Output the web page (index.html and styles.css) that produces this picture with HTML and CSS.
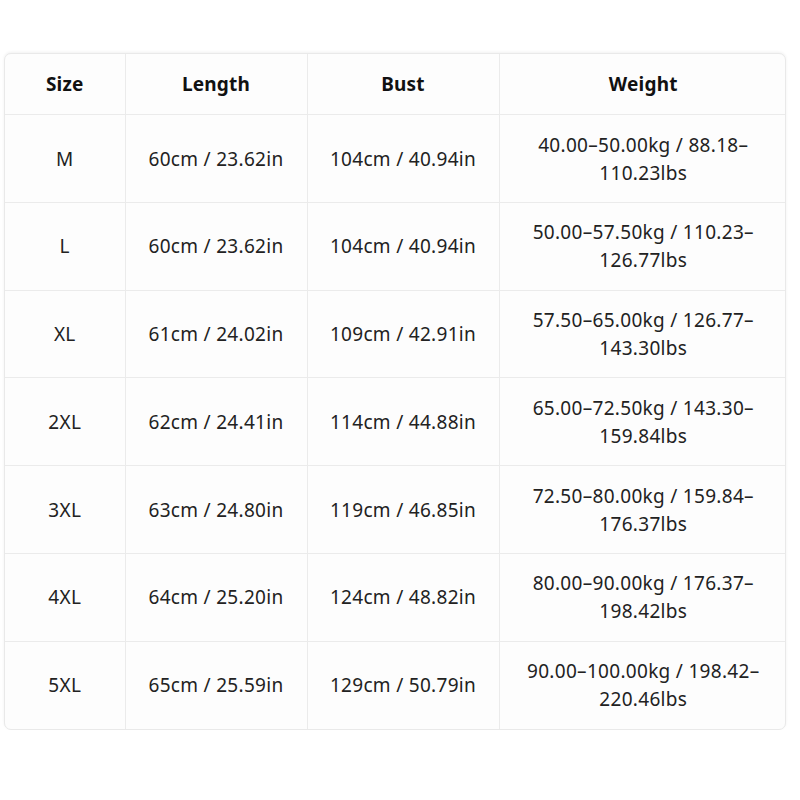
FILE: index.html
```html
<!DOCTYPE html>
<html>
<head>
<meta charset="utf-8">
<link rel="stylesheet" href="styles.css">
</head>
<body>
<div class="page">
  <div class="card">
    <table class="sizes">
      <colgroup>
        <col class="c1"><col class="c2"><col class="c3"><col class="c4">
      </colgroup>
      <thead>
        <tr><th>Size</th><th>Length</th><th>Bust</th><th>Weight</th></tr>
      </thead>
      <tbody>
        <tr><td>M</td><td>60cm / 23.62in</td><td>104cm / 40.94in</td><td>40.00–50.00kg / 88.18–110.23lbs</td></tr>
        <tr><td>L</td><td>60cm / 23.62in</td><td>104cm / 40.94in</td><td>50.00–57.50kg / 110.23–126.77lbs</td></tr>
        <tr><td>XL</td><td>61cm / 24.02in</td><td>109cm / 42.91in</td><td>57.50–65.00kg / 126.77–143.30lbs</td></tr>
        <tr><td>2XL</td><td>62cm / 24.41in</td><td>114cm / 44.88in</td><td>65.00–72.50kg / 143.30–159.84lbs</td></tr>
        <tr><td>3XL</td><td>63cm / 24.80in</td><td>119cm / 46.85in</td><td>72.50–80.00kg / 159.84–176.37lbs</td></tr>
        <tr><td>4XL</td><td>64cm / 25.20in</td><td>124cm / 48.82in</td><td>80.00–90.00kg / 176.37–198.42lbs</td></tr>
        <tr><td>5XL</td><td>65cm / 25.59in</td><td>129cm / 50.79in</td><td>90.00–100.00kg / 198.42–220.46lbs</td></tr>
      </tbody>
    </table>
  </div>
</div>
</body>
</html>
```

FILE: styles.css
```css
html, body {
  margin: 0;
  padding: 0;
  background: #ffffff;
}
.page {
  padding: 53px 14px 0 4px;
  font-family: "Noto Sans", "Open Sans", "Liberation Sans", sans-serif;
  color: #222222;
}
.card {
  width: 782px;
  border: 1px solid #e9e9e9;
  border-radius: 7px;
  overflow: hidden;
  box-shadow: 0 -1px 3px rgba(0,0,0,0.06);
  background: #fdfdfd;
  box-sizing: border-box;
}
.sizes {
  width: 100%;
  border-collapse: collapse;
  table-layout: fixed;
}
.c1 { width: 120px; }
.c2 { width: 182px; }
.c3 { width: 192px; }
.c4 { width: 288px; }
.sizes th, .sizes td {
  text-align: center;
  vertical-align: middle;
  font-size: 19px;
  letter-spacing: 0.3px;
  line-height: 28px;
  padding: 15.5px 18px 15.3px;
  border-right: 1px solid #ebebeb;
  border-bottom: 1px solid #ebebeb;
}
.sizes th {
  padding: 16px 18px;
  font-weight: 700;
  color: #111111;
  letter-spacing: 0.2px;
}
.sizes th:last-child, .sizes td:last-child { border-right: none; }
.sizes tbody tr:last-child td { border-bottom: none; }
.sizes td { font-weight: 400; }
```
